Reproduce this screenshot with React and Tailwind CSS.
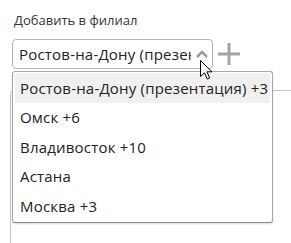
const branches = [
  "Ростов-на-Дону (презентация) +3",
  "Омск +6",
  "Владивосток +10",
  "Астана",
  "Москва +3",
];

const Cursor = () => (
  <svg width="13" height="20" viewBox="0 0 13 20" className="absolute left-[200px] top-[60px]">
    <path
      d="M0.5 0.5 L0.5 16.5 L4.5 12.8 L7.2 19 L9.6 18 L7 11.8 L12 11.8 Z"
      fill="#fff"
      stroke="#000"
      strokeWidth="1"
      strokeLinejoin="miter"
    />
  </svg>
);

export default function App() {
  return (
    <div className="relative w-[291px] h-[243px] overflow-hidden bg-white font-['Open_Sans',sans-serif] text-[#222]">
      <div className="pt-[11px] pl-[14px] text-[13px] leading-[18px] text-[#333]">Добавить в филиал</div>

      <div className="flex items-center mt-[10px] ml-[12px]">
        <div className="flex items-center w-[201px] h-[30px] border border-[#b4b4b4] rounded-[4px] pl-[6px] pr-[3px]">
          <span className="flex-1 overflow-hidden whitespace-nowrap text-[15px] tracking-[0.2px] mr-[4px]">
            Ростов-на-Дону (презентация) +3
          </span>
          <svg width="14" height="10" viewBox="0 0 14 10" className="shrink-0">
            <path d="M2 8 L7 3 L12 8" fill="none" stroke="#9a9a9a" strokeWidth="2.5" />
          </svg>
        </div>
        <svg width="22" height="22" viewBox="0 0 22 22" className="ml-[5px] shrink-0">
          <path d="M11 0 V22 M0 11 H22" stroke="#a3a3a3" strokeWidth="3" />
        </svg>
      </div>

      <div className="mt-[21px] ml-[10px] w-[400px] h-[300px] border border-[#c4c4c4] rounded-[4px]"></div>

      <div className="absolute left-[12px] top-[71px] w-[261px] bg-white border border-[#a8a8a8] border-b-[#8a8a8a] rounded-[3px] px-[2px] py-[1px] shadow-[0_1px_2px_rgba(0,0,0,0.15)]">
        {branches.map((b, i) => (
          <div
            key={i}
            className={`h-[29.5px] flex items-center pl-[5px] text-[15px] tracking-[0.2px] whitespace-nowrap rounded-[3px] ${i === 0 ? "bg-[#f0f0f0]" : ""}`}
          >
            {b}
          </div>
        ))}
      </div>

      <Cursor />
    </div>
  );
}
